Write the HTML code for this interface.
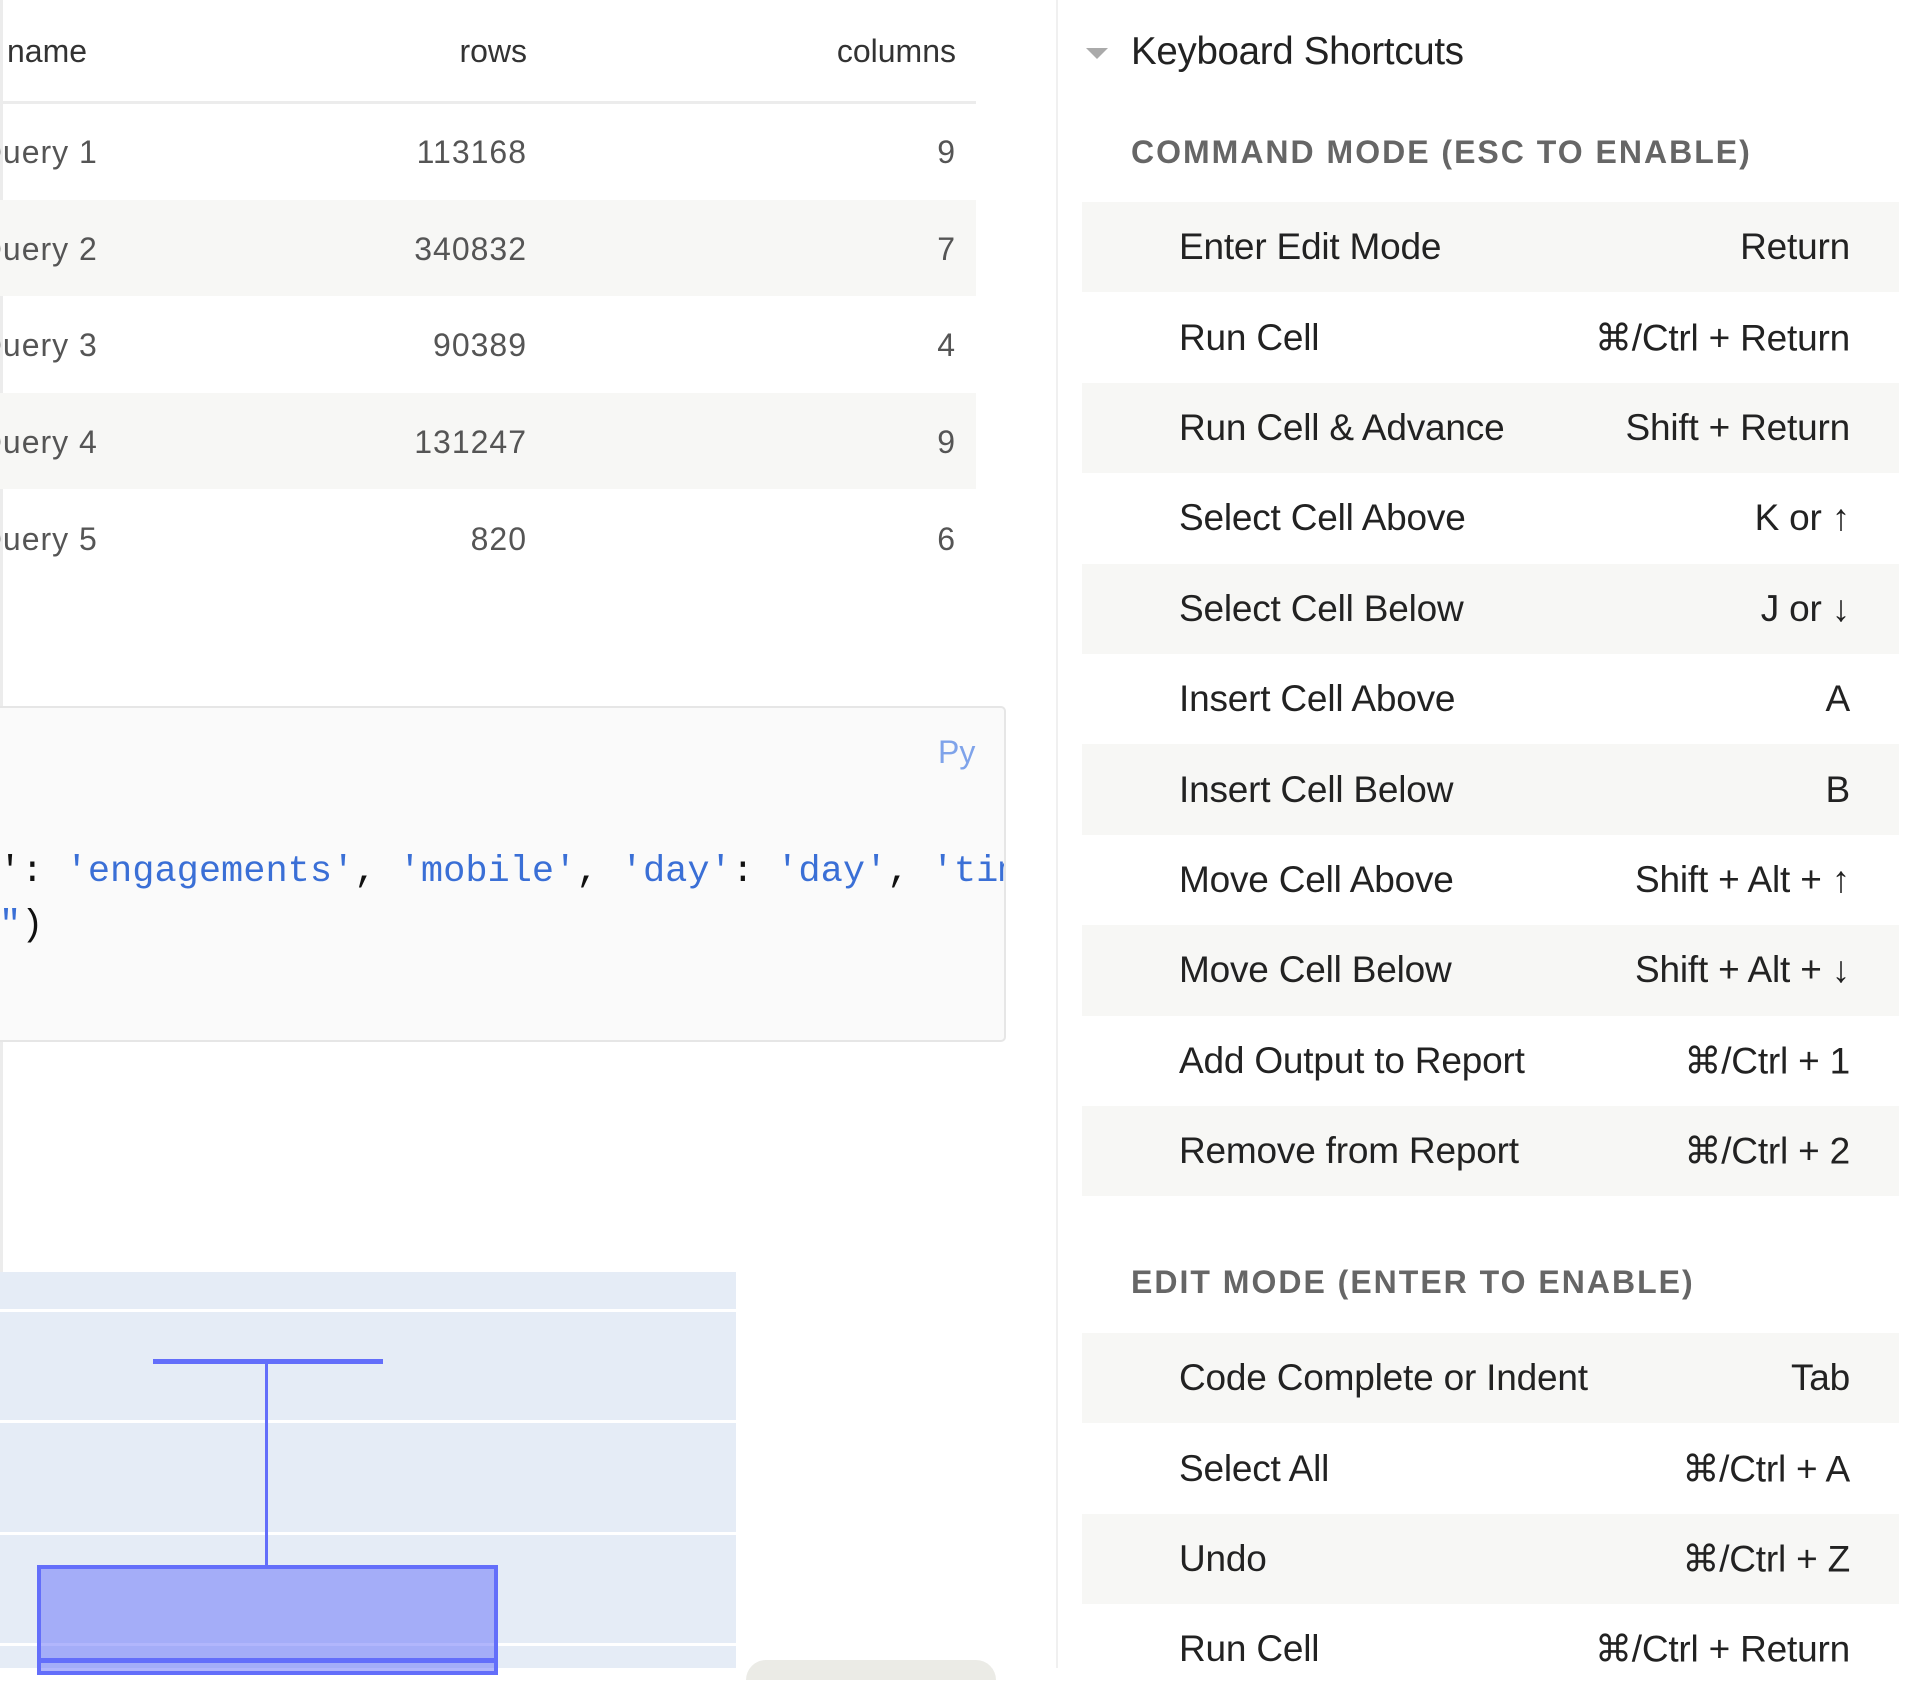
<!DOCTYPE html>
<html><head><meta charset="utf-8"><style>
*{margin:0;padding:0;box-sizing:border-box}
body{width:1914px;height:1668px;overflow:hidden;background:#fff;position:relative;font-family:"Liberation Sans",sans-serif}
.a{position:absolute;white-space:nowrap}
.th{font-size:32px;color:#333;top:33px}
.td{font-size:32px;color:#555;letter-spacing:1px}
.stripe{position:absolute;left:0;width:976px;height:96px;background:#f7f7f5}
.code{font-family:"Liberation Mono",monospace;font-size:37px;color:#111}
.s{color:#3a6fd6}
.row{position:absolute;left:1082px;width:817px;height:90.4px;font-size:37px;color:#222;letter-spacing:-0.2px}
.row.g{background:#f7f7f5}
.row .l{position:absolute;left:97px;top:50%;transform:translateY(-50%)}
.row .r{position:absolute;right:49px;top:50%;transform:translateY(-50%)}
.hd{position:absolute;left:1131px;font-size:32px;font-weight:bold;color:#666;letter-spacing:2px}
</style></head><body>
<div class="a" style="left:0;top:0;width:3px;height:1668px;background:#ececec"></div>
<div class="a" style="left:1056px;top:0;width:2px;height:1668px;background:#f0f0f0"></div>

<div class="a th" style="left:7px">name</div>
<div class="a th" style="right:1387px">rows</div>
<div class="a th" style="right:958px">columns</div>
<div class="a" style="left:0;top:101px;width:976px;height:3px;background:#ececec"></div>
<div class="stripe" style="top:200px"></div>
<div class="stripe" style="top:393px"></div>
<div class="a td" style="left:-23px;top:134px">Query 1</div><div class="a td" style="right:1387px;top:134px">113168</div><div class="a td" style="right:958px;top:134px">9</div>
<div class="a td" style="left:-23px;top:231px">Query 2</div><div class="a td" style="right:1387px;top:231px">340832</div><div class="a td" style="right:958px;top:231px">7</div>
<div class="a td" style="left:-23px;top:327px">Query 3</div><div class="a td" style="right:1387px;top:327px">90389</div><div class="a td" style="right:958px;top:327px">4</div>
<div class="a td" style="left:-23px;top:424px">Query 4</div><div class="a td" style="right:1387px;top:424px">131247</div><div class="a td" style="right:958px;top:424px">9</div>
<div class="a td" style="left:-23px;top:521px">Query 5</div><div class="a td" style="right:1387px;top:521px">820</div><div class="a td" style="right:958px;top:521px">6</div>

<div class="a" style="left:-10px;top:706px;width:1016px;height:336px;background:#fafafa;border:2px solid #e6e6e6;border-radius:5px;overflow:hidden">
 <div class="a" style="left:946px;top:26px;font-size:32px;color:#7fa3ea">Py</div>
 <div class="a code" style="left:7px;top:143px">': <span class="s">'engagements'</span>, <span class="s">'mobile'</span>, <span class="s">'day'</span>: <span class="s">'day'</span>, <span class="s">'time'</span></div>
 <div class="a code" style="left:7px;top:197px"><span class="s">"</span>)</div>
</div>

<div class="a" style="left:0;top:1272px;width:736px;height:396px;background:#e5ecf6"></div>
<div class="a" style="left:0;top:1309px;width:736px;height:3px;background:#fff"></div>
<div class="a" style="left:0;top:1420px;width:736px;height:3px;background:#fff"></div>
<div class="a" style="left:0;top:1532px;width:736px;height:3px;background:#fff"></div>
<div class="a" style="left:0;top:1643px;width:736px;height:3px;background:#fff"></div>
<div class="a" style="left:153px;top:1359px;width:230px;height:5px;background:#636efa"></div>
<div class="a" style="left:265px;top:1362px;width:3px;height:206px;background:#636efa"></div>
<div class="a" style="left:37px;top:1565px;width:461px;height:110px;background:rgba(99,110,250,0.5);border:4px solid #636efa"></div>
<div class="a" style="left:37px;top:1658px;width:461px;height:5px;background:#636efa"></div>
<div class="a" style="left:746px;top:1660px;width:250px;height:20px;background:#ebebe6;border-radius:20px 20px 0 0"></div>

<div class="a" style="left:1086px;top:48px;width:0;height:0;border-left:11px solid transparent;border-right:11px solid transparent;border-top:11px solid #aaa"></div>
<div class="a" style="left:1131px;top:30px;font-size:38.5px;color:#222;letter-spacing:-0.3px">Keyboard Shortcuts</div>
<div class="hd" style="top:134px">COMMAND MODE (ESC TO ENABLE)</div>
<div class="row g" style="top:202px"><span class="l">Enter Edit Mode</span><span class="r">Return</span></div>
<div class="row" style="top:292.4px"><span class="l">Run Cell</span><span class="r">⌘/Ctrl + Return</span></div>
<div class="row g" style="top:382.8px"><span class="l">Run Cell &amp; Advance</span><span class="r">Shift + Return</span></div>
<div class="row" style="top:473.2px"><span class="l">Select Cell Above</span><span class="r">K or ↑</span></div>
<div class="row g" style="top:563.6px"><span class="l">Select Cell Below</span><span class="r">J or ↓</span></div>
<div class="row" style="top:654px"><span class="l">Insert Cell Above</span><span class="r">A</span></div>
<div class="row g" style="top:744.4px"><span class="l">Insert Cell Below</span><span class="r">B</span></div>
<div class="row" style="top:834.8px"><span class="l">Move Cell Above</span><span class="r">Shift + Alt + ↑</span></div>
<div class="row g" style="top:925.2px"><span class="l">Move Cell Below</span><span class="r">Shift + Alt + ↓</span></div>
<div class="row" style="top:1015.6px"><span class="l">Add Output to Report</span><span class="r">⌘/Ctrl + 1</span></div>
<div class="row g" style="top:1106px"><span class="l">Remove from Report</span><span class="r">⌘/Ctrl + 2</span></div>
<div class="hd" style="top:1264px">EDIT MODE (ENTER TO ENABLE)</div>
<div class="row g" style="top:1333px"><span class="l">Code Complete or Indent</span><span class="r">Tab</span></div>
<div class="row" style="top:1423.4px"><span class="l">Select All</span><span class="r">⌘/Ctrl + A</span></div>
<div class="row g" style="top:1513.8px"><span class="l">Undo</span><span class="r">⌘/Ctrl + Z</span></div>
<div class="row" style="top:1604.2px"><span class="l">Run Cell</span><span class="r">⌘/Ctrl + Return</span></div>
</body></html>
